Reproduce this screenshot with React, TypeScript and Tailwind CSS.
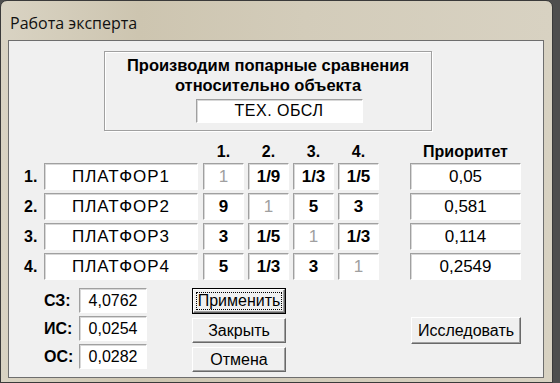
import type { ReactNode } from 'react';

// Delphi-style "expert" dialog: pairwise comparison matrix with priorities.

const font = 'font-["Liberation_Sans",Arial,sans-serif]';

function Field({ className = '', children }: { className?: string; children?: ReactNode }) {
  return (
    <div
      className={`flex items-center justify-center bg-white border border-t-[#a0a0a0] border-l-[#a0a0a0] border-r-white border-b-white shadow-[inset_1px_1px_0_#d8d8d8] ${className}`}
    >
      {children}
    </div>
  );
}

function Button({
  label,
  isDefault = false,
  className = '',
}: {
  label: string;
  isDefault?: boolean;
  className?: string;
}) {
  return (
    <div
      className={`flex bg-[#f0f0f0] ${isDefault ? 'border border-black' : ''} ${className}`}
    >
      <div className="flex flex-1 border border-t-white border-l-white border-r-[#696969] border-b-[#696969] shadow-[inset_-1px_-1px_0_#a0a0a0] p-[2px]">
        <div
          className={`flex flex-1 items-center justify-center text-[16px] text-black ${
            isDefault ? 'outline outline-1 outline-dotted outline-black -outline-offset-1' : ''
          }`}
        >
          {label}
        </div>
      </div>
    </div>
  );
}

const names = ['ПЛАТФОР1', 'ПЛАТФОР2', 'ПЛАТФОР3', 'ПЛАТФОР4'];
const matrix = [
  ['1', '1/9', '1/3', '1/5'],
  ['9', '1', '5', '3'],
  ['3', '1/5', '1', '1/3'],
  ['5', '1/3', '3', '1'],
];
const priorities = ['0,05', '0,581', '0,114', '0,2549'];
const stats = [
  { label: 'СЗ:', value: '4,0762' },
  { label: 'ИС:', value: '0,0254' },
  { label: 'ОС:', value: '0,0282' },
];

export default function App() {
  return (
    <div className={`w-[560px] h-[383px] bg-[#4e4e4e] overflow-hidden ${font}`}>
      <div className="w-[553px] h-[383px] flex flex-col rounded-tl-[7px] rounded-tr-[7px] border border-[#3a3a3a] bg-[linear-gradient(90deg,#d9d3c3_0%,#cdc5b0_25%,#d3ccba_55%,#d8d2c2_100%)]">
        {/* title bar */}
        <div className="h-[39px] flex items-center pl-[9px] pt-[4px] shrink-0">
          <span className='font-["Open_Sans","Noto_Sans",sans-serif] text-[16px] text-[#111]'>
            Работа эксперта
          </span>
        </div>

        {/* client area */}
        <div className="ml-[7px] mr-[8px] mb-[4px] flex-1 bg-[#f0f0f0] border border-[#6e6e6e] flex flex-col">
          {/* group box */}
          <div className="ml-[95px] mt-[10px] w-[328px] h-[80px] border border-[#a0a0a0] shadow-[1px_1px_0_#fff,inset_1px_1px_0_#fff] flex flex-col items-center pt-[3px]">
            <div className="text-[16.5px] font-bold leading-[20px] text-black">
              Производим попарные сравнения
            </div>
            <div className="text-[16.5px] font-bold leading-[20px] text-black">относительно объекта</div>
            <Field className="mt-[4px] ml-[22px] w-[167px] h-[24px] text-[16px] tracking-[0.5px] text-black">ТЕХ. ОБСЛ</Field>
          </div>

          {/* matrix headers */}
          <div className="flex mt-[12px] h-[18px] items-center text-[16px] font-bold text-black">
            <div className="w-[194px] shrink-0" />
            {['1.', '2.', '3.', '4.'].map((h) => (
              <div key={h} className="w-[41px] mr-[4px] text-center">
                {h}
              </div>
            ))}
            <div className="w-[111px] ml-[27px] text-center">Приоритет</div>
          </div>

          {/* matrix rows */}
          <div className="flex flex-col gap-[3px] mt-[2px]">
            {names.map((n, i) => (
              <div key={n} className="flex h-[27px]">
                <div className="w-[20px] ml-[15px] flex items-center text-[16px] font-bold text-black">
                  {i + 1}.
                </div>
                <Field className="w-[154px] mr-[5px] text-[17px] tracking-[1px] text-black">{n}</Field>
                {matrix[i].map((v, j) => (
                  <Field
                    key={j}
                    className={`w-[41px] mr-[4px] text-[17px] ${
                      i === j ? 'text-[#a0a0a0]' : 'font-bold text-black'
                    }`}
                  >
                    {v}
                  </Field>
                ))}
                <Field className="w-[111px] ml-[27px] text-[17px] text-black">{priorities[i]}</Field>
              </div>
            ))}
          </div>

          {/* bottom: stats + buttons */}
          <div className="flex mt-[8px]">
            <div className="flex flex-col gap-[3px] ml-[35px]">
              {stats.map((s) => (
                <div key={s.label} className="flex h-[25px] items-center">
                  <div className="w-[35px] text-[16px] font-bold text-black">{s.label}</div>
                  <Field className="w-[68px] h-[25px] text-[16px] text-black">{s.value}</Field>
                </div>
              ))}
            </div>
            <div className="flex flex-col gap-[4px] ml-[45px]">
              <Button label="Применить" isDefault className="w-[94px] h-[26px]" />
              <Button label="Закрыть" className="w-[94px] h-[25px]" />
              <Button label="Отмена" className="w-[94px] h-[25px]" />
            </div>
            <div className="ml-[125px] mt-[29px]">
              <Button label="Исследовать" className="w-[110px] h-[27px]" />
            </div>
          </div>
        </div>
      </div>
    </div>
  );
}
